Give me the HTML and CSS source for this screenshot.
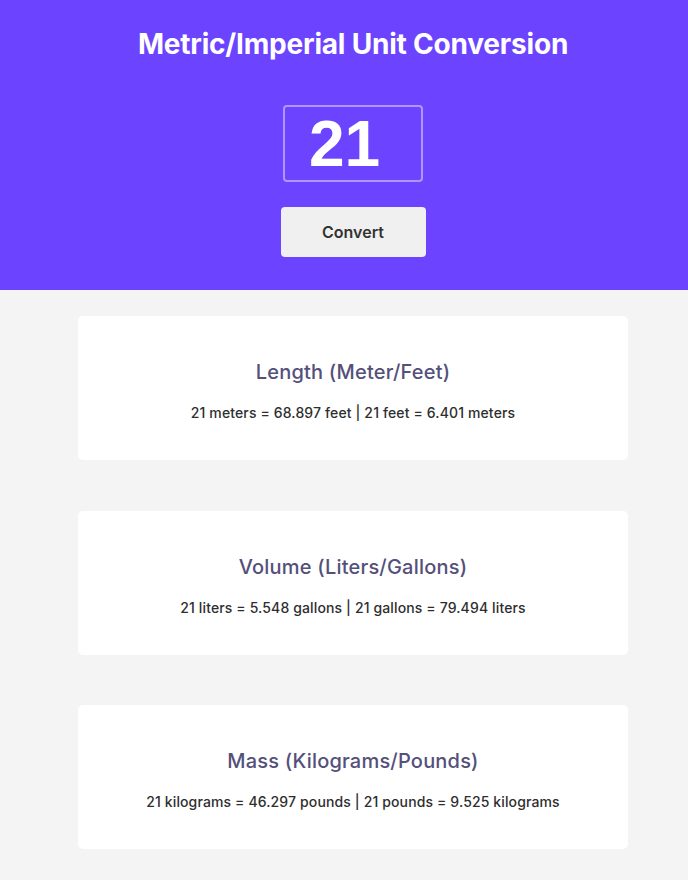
FILE: index.html
```html
<!DOCTYPE html>
<html>
<head>
<meta charset="utf-8">
<link rel="stylesheet" href="styles.css">
</head>
<body>
<header class="hero">
  <h1 class="title">Metric/Imperial Unit Conversion</h1>
  <input class="num-input" type="text" value="21">
  <button class="convert-btn">Convert</button>
</header>
<main class="results">
  <section class="card">
    <h2 class="card-title">Length (Meter/Feet)</h2>
    <p class="card-text">21 meters = 68.897 feet | 21 feet = 6.401 meters</p>
  </section>
  <section class="card">
    <h2 class="card-title">Volume (Liters/Gallons)</h2>
    <p class="card-text">21 liters = 5.548 gallons | 21 gallons = 79.494 liters</p>
  </section>
  <section class="card">
    <h2 class="card-title">Mass (Kilograms/Pounds)</h2>
    <p class="card-text">21 kilograms = 46.297 pounds | 21 pounds = 9.525 kilograms</p>
  </section>
</main>
</body>
</html>
```

FILE: styles.css
```css
* { box-sizing: border-box; }
html, body {
  margin: 0;
  padding: 0;
  background: #f4f4f4;
  font-family: Inter, "Noto Sans", sans-serif;
}
.hero {
  background: #6c44ff;
  height: 290px;
  display: flex;
  flex-direction: column;
  align-items: center;
  padding: 27px 0 0 18px;
}
.title {
  margin: 0;
  color: #ffffff;
  font-size: 28px;
  font-weight: 700;
  line-height: 34px;
  letter-spacing: -0.2px;
}
.num-input {
  margin-top: 44px;
  width: 140px;
  height: 77px;
  border: 2px solid rgba(255, 255, 255, 0.45);
  border-radius: 4px;
  background: transparent;
  color: #ffffff;
  font-family: "Liberation Sans", Arial, sans-serif;
  font-weight: 700;
  font-size: 64px;
  padding: 0 0 0 24px;
  outline: none;
}
.convert-btn {
  margin-top: 25px;
  width: 145px;
  height: 50px;
  border: none;
  border-radius: 4px;
  background: #f0f0f0;
  color: #333333;
  font-family: Inter, "Noto Sans", sans-serif;
  font-size: 16px;
  font-weight: 600;
}
.results {
  display: flex;
  flex-direction: column;
  align-items: center;
  gap: 50.6px;
  padding: 26px 0 0 18px;
}
.card {
  width: 550px;
  height: 144px;
  background: #ffffff;
  border-radius: 5px;
  display: flex;
  flex-direction: column;
  align-items: center;
  padding-top: 44px;
}
.card-title {
  margin: 0;
  font-size: 20px;
  font-weight: 500;
  color: #54507a;
  line-height: 24px;
  letter-spacing: 0.2px;
}
.card-text {
  margin: 20px 0 0;
  font-size: 14px;
  font-weight: 500;
  color: #2e2e2e;
  line-height: 18px;
  letter-spacing: 0.13px;
}
```
